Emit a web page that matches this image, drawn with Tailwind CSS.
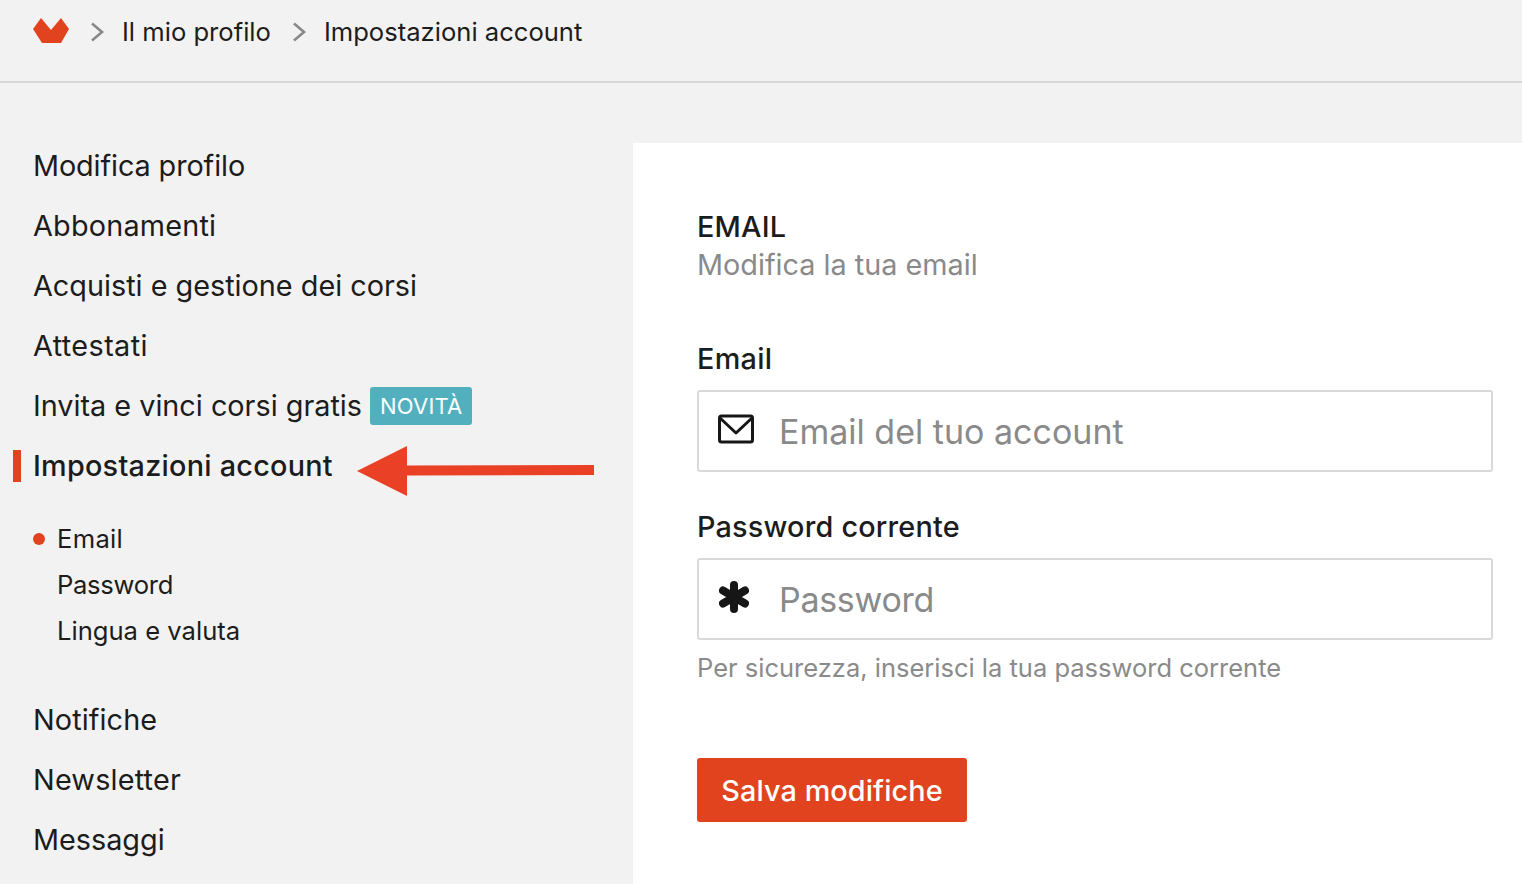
<!doctype html>
<html><head><meta charset="utf-8"><script src="https://cdn.jsdelivr.net/npm/@tailwindcss/browser@4"></script></head>
<body class="h-[884px] w-[1522px] overflow-hidden bg-[#f2f2f2] font-['Inter',sans-serif] text-[#1c1c1c]">
<header class="flex h-[83px] items-start border-b-2 border-[#d8d8d8] pl-[33px] pt-[14px] text-[25.6px] leading-[36px]">
<svg class="mt-[4px] h-[25px] w-[36px]" viewBox="0 0 36 25"><path fill="#e2431f" d="M0 11 L8 0 L18 12 L28 0 L36 11 L28 25 L9 25 Z"/></svg>
<svg class="ml-[20px] mt-[6px] h-[24px] w-[16px]" viewBox="0 0 16 24" fill="none" stroke="#888" stroke-width="2.6"><path d="M3 3.5l10 8.5-10 8.5"/></svg>
<span class="ml-[17px]">Il mio profilo</span>
<svg class="ml-[20px] mt-[6px] h-[24px] w-[16px]" viewBox="0 0 16 24" fill="none" stroke="#888" stroke-width="2.6"><path d="M3 3.5l10 8.5-10 8.5"/></svg>
<span class="ml-[17px]">Impostazioni account</span>
</header>
<div class="flex h-[801px] pt-[60px]">
<aside class="relative -mt-[7px] w-[633px] shrink-0 pl-[33px] text-[28.8px] leading-[60px]">
<div class="tracking-[-0.1px]">Modifica profilo</div><div class="tracking-[0.2px]">Abbonamenti</div><div>Acquisti e gestione dei corsi</div><div class="tracking-[0.4px]">Attestati</div>
<div class="flex items-center">Invita e vinci corsi gratis<span class="ml-[8px] rounded-[3px] bg-[#52b0be] px-[10px] text-[22px] leading-[38px] tracking-[0.2px] text-white">NOVITÀ</span></div>
<div class="relative font-[450] tracking-[0.25px]">Impostazioni account<span class="absolute -left-[20px] top-[14px] h-[32px] w-[8px] bg-[#e2431f]"></span>
<svg class="absolute left-[324px] top-[10px] h-[50px] w-[238px]" viewBox="0 0 238 50"><path fill="#ea4025" d="M0 25 L50 0 L50 19.5 L237 19 L237 29 L50 29.5 L50 50 Z"/></svg></div>
<div class="mb-[36px] mt-[20px] text-[25.6px] leading-[46px]">
<div class="relative pl-[24px] tracking-[0.3px]"><span class="absolute left-0 top-[17px] h-[12px] w-[12px] rounded-full bg-[#e2431f]"></span>Email</div>
<div class="pl-[24px] tracking-[-0.3px]">Password</div><div class="pl-[24px]">Lingua e valuta</div></div>
<div class="tracking-[0.1px]">Notifiche</div><div class="tracking-[0.2px]">Newsletter</div><div>Messaggi</div>
</aside>
<main class="h-[741px] flex-1 bg-white pl-[64px] pr-[29px] pt-[64px]">
<div class="text-[28.8px] font-[450] leading-[40px] tracking-[0.2px]">EMAIL</div>
<div class="text-[28.8px] leading-[36px] text-[#8a8a8a]">Modifica la tua email</div>
<div class="mt-[56px] text-[28.8px] font-[450] leading-[40px] tracking-[0.3px]">Email</div>
<div class="mt-[11px] flex h-[82px] items-center rounded-[3px] border-2 border-[#d9d9d9] pl-[18px] text-[34px] text-[#8a8a8a]">
<svg class="-mt-[4px] h-[30px] w-[38px]" viewBox="0 0 38 30" fill="none" stroke="#161616" stroke-width="3" stroke-linejoin="round"><rect x="2.500" y="2" width="33" height="26" rx="2"/><path d="M3 4l16 15 16-15"/></svg><span class="ml-[24px]">Email del tuo account</span></div>
<div class="mt-[35px] text-[28.8px] font-[450] leading-[40px] tracking-[0.2px]">Password corrente</div>
<div class="mt-[11px] flex h-[82px] items-center rounded-[3px] border-2 border-[#d9d9d9] pl-[20px] text-[34px] text-[#8a8a8a]">
<svg class="-mt-[4px] h-[32px] w-[30px]" viewBox="0 0 30 32" fill="none" stroke="#161616" stroke-width="8" stroke-linecap="round"><path d="M15 4v24M4 9.500l22 13M26 9.500L4 22.500"/></svg><span class="ml-[30px] tracking-[-0.3px]">Password</span></div>
<div class="mt-[10px] text-[25.5px] leading-[36px] text-[#8a8a8a]">Per sicurezza, inserisci la tua password corrente</div>
<button class="mt-[72px] h-[64px] w-[270px] rounded-[3px] bg-[#e2431f] pt-[2px] text-[28.8px] font-[450] tracking-[0.1px] text-white">Salva modifiche</button>
</main>
</div>
</body></html>
